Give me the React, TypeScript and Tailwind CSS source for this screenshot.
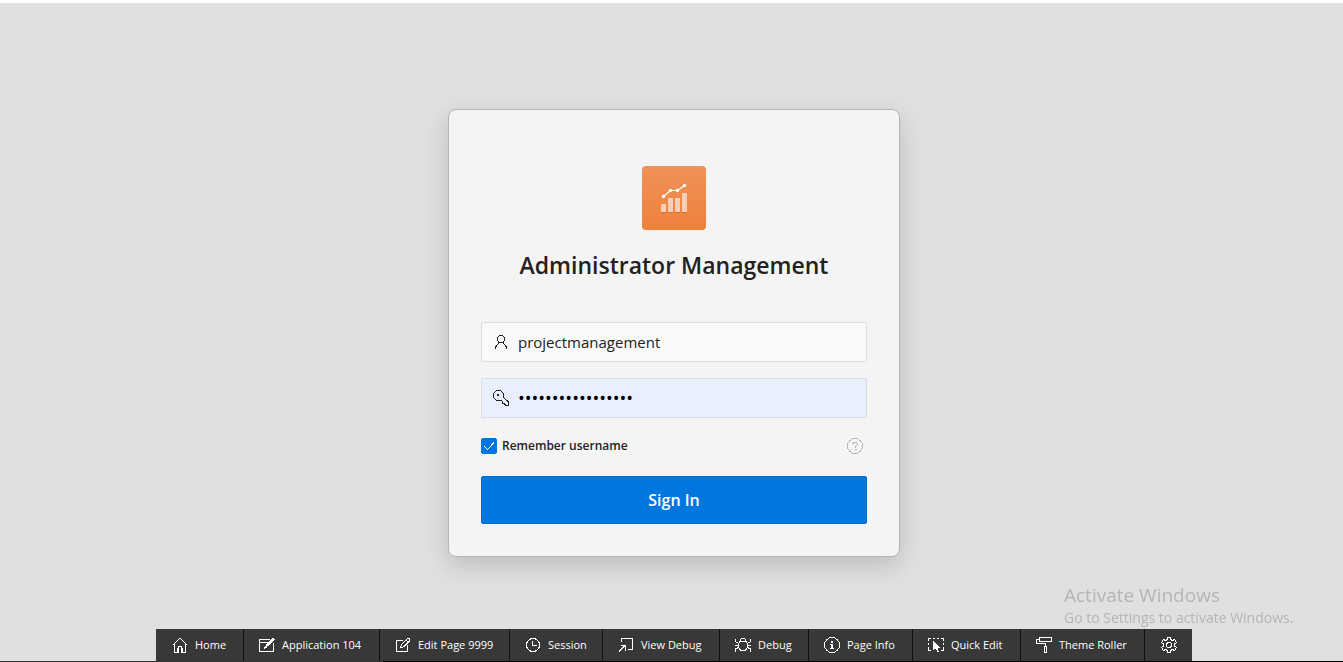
import { useState, type ReactNode } from "react";

function Icon({ children, className = "size-4" }: { children: ReactNode; className?: string }) {
  return (
    <svg
      viewBox="0 0 16 16"
      fill="none"
      stroke="currentColor"
      strokeWidth="1"
      shapeRendering="crispEdges"
      aria-hidden="true"
      className={`shrink-0 ${className}`}
    >
      {children}
    </svg>
  );
}

const tools: { label: string; width: string; icon: ReactNode }[] = [
  {
    label: "Home",
    width: "w-[88px]",
    icon: (
      <Icon>
        <path d="M.5 8.500l7.500-7.500l7.500 7.500M2.500 7v8.500h3.500v-4.500q0-1.500 1.500-1.500h1q1.500 0 1.500 1.500v4.500h3.500V7" strokeWidth="1.200" />
      </Icon>
    ),
  },
  {
    label: "Application 104",
    width: "w-[136px]",
    icon: (
      <Icon>
        <path d="M11 2.500H.5v12h14V6M.5 5.500h8" />
        <path d="M15 1.500L8 8.500" strokeWidth="2.400" />
        <path d="M7.500 8l-2 3 3-1.500" />
      </Icon>
    ),
  },
  {
    label: "Edit Page 9999",
    width: "w-[130px]",
    icon: (
      <Icon>
        <path d="M8 3.500H1.500v11h11V8" />
        <path d="M5.500 10.500l1-3 6-6q1-.5 2 .5t0 2l-6 6zM11 3l2 2" />
      </Icon>
    ),
  },
  {
    label: "Session",
    width: "w-[93px]",
    icon: (
      <Icon>
        <circle cx="8" cy="8" r="6.500" />
        <path d="M7.500 3.500v5H12" />
      </Icon>
    ),
  },
  {
    label: "View Debug",
    width: "w-[117px]",
    icon: (
      <Icon>
        <path d="M3.500 5V1.500h11v11H10M1 14.500l6-6M2.500 8.500h5v5" />
      </Icon>
    ),
  },
  {
    label: "Debug",
    width: "w-[89px]",
    icon: (
      <Icon>
        <path d="M5 4.500h6l1.500 2v4L10.500 13 8 14 5.500 13 3.500 10.500v-4zM5.500 4.500v-2L7 1.500h2l1.500 1v2M.5 1.500v3l3 2M15.500 1.500v3l-3 2M0 8.500h3.500M12.500 8.500H16M.5 15v-3l3-1.500M15.500 15v-3l-3-1.500" />
      </Icon>
    ),
  },
  {
    label: "Page Info",
    width: "w-[104px]",
    icon: (
      <Icon>
        <circle cx="8" cy="8" r="7.500" />
        <path d="M8 4v2M8 7v5" strokeWidth="2" />
        <path d="M6 7.500h2M6 11.500h4" />
      </Icon>
    ),
  },
  {
    label: "Quick Edit",
    width: "w-[108px]",
    icon: (
      <Icon>
        <path d="M.5 4V1.500H3M5 1.500h2M9 1.500h2M13 1.500h2.500V4M.5 6v2M.5 10v3.500H3M15.500 6v2M15.500 10v3.500H13" />
        <path d="M5 4l7 6.500H9.500L11 15H9.500L8 11.500 5 13z" fill="currentColor" stroke="none" />
      </Icon>
    ),
  },
  {
    label: "Theme Roller",
    width: "w-[124px]",
    icon: (
      <Icon>
        <path d="M3.500.5h12v4h-12zM3.500 2.500h-3v4h9v3M8.500 9.500h2v6h-2z" />
      </Icon>
    ),
  },
];

function ChartLogo() {
  return (
    <svg viewBox="0 0 64 64" className="size-16 rounded" aria-hidden="true">
      <defs>
        <linearGradient id="tile" x1="0" y1="0" x2="0" y2="1">
          <stop offset="0" stopColor="#f09259" />
          <stop offset="1" stopColor="#ed813b" />
        </linearGradient>
      </defs>
      <rect width="64" height="64" fill="url(#tile)" />
      <path d="M19 46.500h5M26 46.500h5M33 46.500h5M40 46.500h5" stroke="#d56e2d" />
      <path d="M19 38h5v8h-5zM26 32h5v14h-5zM33 32h5v14h-5zM40 27h5v19h-5z" fill="#f9cfb5" />
      <path d="M21.500 30.500l7-6h7l7-5" fill="none" stroke="#fff" strokeWidth="1.200" />
      <g fill="#fff">
        <circle cx="21.500" cy="30.500" r="1.700" />
        <circle cx="28.500" cy="24.500" r="1.700" />
        <circle cx="35.500" cy="24.500" r="1.700" />
        <circle cx="42.500" cy="19.500" r="1.700" />
      </g>
    </svg>
  );
}

export default function App() {
  const [username, setUsername] = useState("projectmanagement");
  const [password, setPassword] = useState("aaaaaaaaaaaaaaaaa");
  const [remember, setRemember] = useState(true);

  return (
    <div className="flex min-h-screen flex-col border-t-[3px] border-white bg-[#e0e0e0] font-['Open_Sans','Noto_Sans',sans-serif] text-[#222]">
      <main className="flex flex-1 items-center justify-center pl-[5px]">
        <form
          onSubmit={(e) => e.preventDefault()}
          className="flex w-full max-w-[452px] flex-col rounded-lg border border-[#b5b5b5] bg-[#f4f4f4] px-8 pt-14 pb-8 shadow-[0_8px_24px_rgba(0,0,0,0.16)]"
        >
          <div className="flex flex-col items-center gap-5 pb-[42px]">
            <ChartLogo />
            <h1 className="text-[23px] leading-[30px] font-semibold whitespace-nowrap">Administrator Management</h1>
          </div>

          <div className="flex flex-col gap-4">
            <div className="flex h-10 items-center gap-[9px] rounded-xs border border-[#dedede] bg-[#f9f9f9] pr-3 pl-[11px]">
              <Icon>
                <circle cx="8" cy="5" r="3.500" />
                <path d="M2.500 15v-2L5 10l1-1.500M10 8.500l1 1.500 2.500 3v2" />
              </Icon>
              <input
                type="text"
                aria-label="Username"
                value={username}
                onChange={(e) => setUsername(e.target.value)}
                className="h-full min-w-0 flex-1 bg-transparent text-[15px] outline-none"
              />
            </div>
            <div className="flex h-10 items-center gap-[9px] rounded-xs border border-[#d9dce3] bg-[#e8f0fe] pr-3 pl-[11px]">
              <Icon>
                <path d="M3.500.5h4l3 3v4l5 4.500v3.500h-3l-1-2h-2v-2l-1-1h-5l-3-3v-4z" />
                <path d="M4 5h2" strokeWidth="2" />
              </Icon>
              <input
                type="password"
                aria-label="Password"
                value={password}
                onChange={(e) => setPassword(e.target.value)}
                className="h-full min-w-0 flex-1 bg-transparent text-lg text-black outline-none"
              />
            </div>
          </div>

          <div className="flex h-[58px] items-center justify-between pr-1 pb-0.5">
            <label className="flex items-center gap-[5px] text-xs font-semibold">
              <span className="grid size-4 place-items-center">
                <input
                  type="checkbox"
                  checked={remember}
                  onChange={(e) => setRemember(e.target.checked)}
                  className="peer col-start-1 row-start-1 size-4 appearance-none rounded-xs border border-[#999] bg-white checked:border-[#0076df] checked:bg-[#0076df]"
                />
                <Icon className="pointer-events-none col-start-1 row-start-1 size-4 text-white opacity-0 peer-checked:opacity-100">
                  <path d="M3 8l3.500 3.500L13 4.500" />
                </Icon>
              </span>
              Remember username
            </label>
            <button type="button" aria-label="Help" className="text-[#b5b5b5]">
              <Icon>
                <circle cx="8" cy="8" r="7.500" />
                <path d="M5.500 6.500l1-2h3l1 1v1l-2 2V10M8 11.500h1.500" />
              </Icon>
            </button>
          </div>

          <button
            type="submit"
            className="h-12 rounded-xs border border-[#006bc9] bg-[#0076df] text-base font-semibold text-white"
          >
            Sign In
          </button>
        </form>
      </main>

      <aside className="pointer-events-none fixed right-[43px] bottom-[34px] min-w-[236px] text-[#b5b5b5]">
        <p className="text-[19px] leading-[25px]">Activate Windows</p>
        <p className="text-[14px] leading-5 whitespace-nowrap">Go to Settings to activate Windows.</p>
      </aside>

      <footer className="fixed inset-x-0 bottom-0">
        <nav aria-label="Developer toolbar" className="flex justify-center pl-[5px]">
          {tools.map((tool) => (
            <button
              key={tool.label}
              type="button"
              className={`flex h-8 shrink-0 items-center gap-[7px] border-r border-[#111] bg-[#383838] pl-[15px] text-[11px] whitespace-nowrap text-white first:pl-4 ${tool.width}`}
            >
              {tool.icon}
              {tool.label}
            </button>
          ))}
          <button
            type="button"
            aria-label="Settings"
            className="flex h-8 w-[47px] shrink-0 items-center justify-center bg-[#383838] text-white"
          >
            <Icon>
              <path d="M6.500.5h3v2l2 1 2-1 2 3-2 1.500v2l2 1.500-2 3-2-1-2 1v2h-3v-2l-2-1-2 1-2-3 2-1.500v-2l-2-1.500 2-3 2 1 2-1z" />
              <circle cx="8" cy="8" r="2.500" />
            </Icon>
          </button>
        </nav>
        <div className="flex h-px">
          <div className="w-[383px] bg-[#333]" />
          <div className="flex-1 bg-black" />
        </div>
      </footer>
    </div>
  );
}
